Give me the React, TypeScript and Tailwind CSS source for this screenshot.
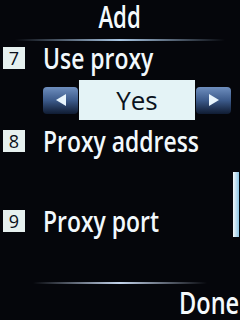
import React from "react";

const font = { fontFamily: '"Open Sans", "DejaVu Sans", sans-serif' };

function Badge({ n }: { n: string }) {
  return (
    <div className="flex h-[22px] w-[22px] shrink-0 items-center justify-center bg-[#e6f0ef] text-[18px] leading-none text-[#0a0f1a]">
      {n}
    </div>
  );
}

function Row({ n, label }: { n: string; label: string }) {
  return (
    <div className="flex h-[28px] items-center">
      <div className="ml-[3px]">
        <Badge n={n} />
      </div>
      <div className="ml-[18px] origin-left scale-x-[0.79] whitespace-nowrap text-[29px] font-semibold leading-[28px] text-[#f2f8fc]">
        {label}
      </div>
    </div>
  );
}

function ArrowBtn({ dir }: { dir: "l" | "r" }) {
  return (
    <div className="flex h-[27px] w-[35px] items-center justify-center rounded-[4px] bg-gradient-to-b from-[#6f8fbf] via-[#3c5a8a] to-[#101c33]">
      <svg width="14" height="14" viewBox="0 0 14 14">
        {dir === "l" ? (
          <polygon points="12,1 12,13 2,7" fill="#e8f4fc" />
        ) : (
          <polygon points="2,1 2,13 12,7" fill="#e8f4fc" />
        )}
      </svg>
    </div>
  );
}

export default function App() {
  return (
    <div className="flex h-[320px] w-[240px] flex-col overflow-hidden bg-[#05060b]" style={font}>
      <div className="flex h-[34px] justify-center">
        <div className="scale-x-[0.74] whitespace-nowrap text-[30px] font-semibold leading-[34px] text-[#f4f9fc]">
          Add
        </div>
      </div>
      <div className="h-[5px]" />
      <div className="mx-[15px] h-[2px] bg-gradient-to-r from-transparent via-[#a9c6e4] to-transparent" />
      <div className="h-[3px]" />
      <Row n="7" label="Use proxy" />
      <div className="mt-[8px] flex h-[40px] items-center pl-[43px]">
        <ArrowBtn dir="l" />
        <div className="mx-[1px] flex h-[40px] w-[116px] items-center justify-center bg-[#e4f3f6] text-[26px] leading-none text-[#0b1220]">
          Yes
        </div>
        <ArrowBtn dir="r" />
      </div>
      <div className="h-[7px]" />
      <Row n="8" label="Proxy address" />
      <div className="relative z-10 h-[52px]">
        <div className="absolute right-[1px] top-[17px] h-[65px] w-[6px] bg-gradient-to-r from-[#f4f8fa] to-[#8cc4e4]" />
      </div>
      <Row n="9" label="Proxy port" />
      <div className="h-[47px]" />
      <div className="mx-[33px] h-[2px] bg-gradient-to-r from-transparent via-[#c4d4ec] to-transparent" />
      <div className="flex justify-end pr-[1px] pt-[1px]">
        <div className="origin-right scale-x-[0.76] whitespace-nowrap text-[31px] font-semibold leading-[34px] text-[#f4f9fc]">
          Done
        </div>
      </div>
    </div>
  );
}
